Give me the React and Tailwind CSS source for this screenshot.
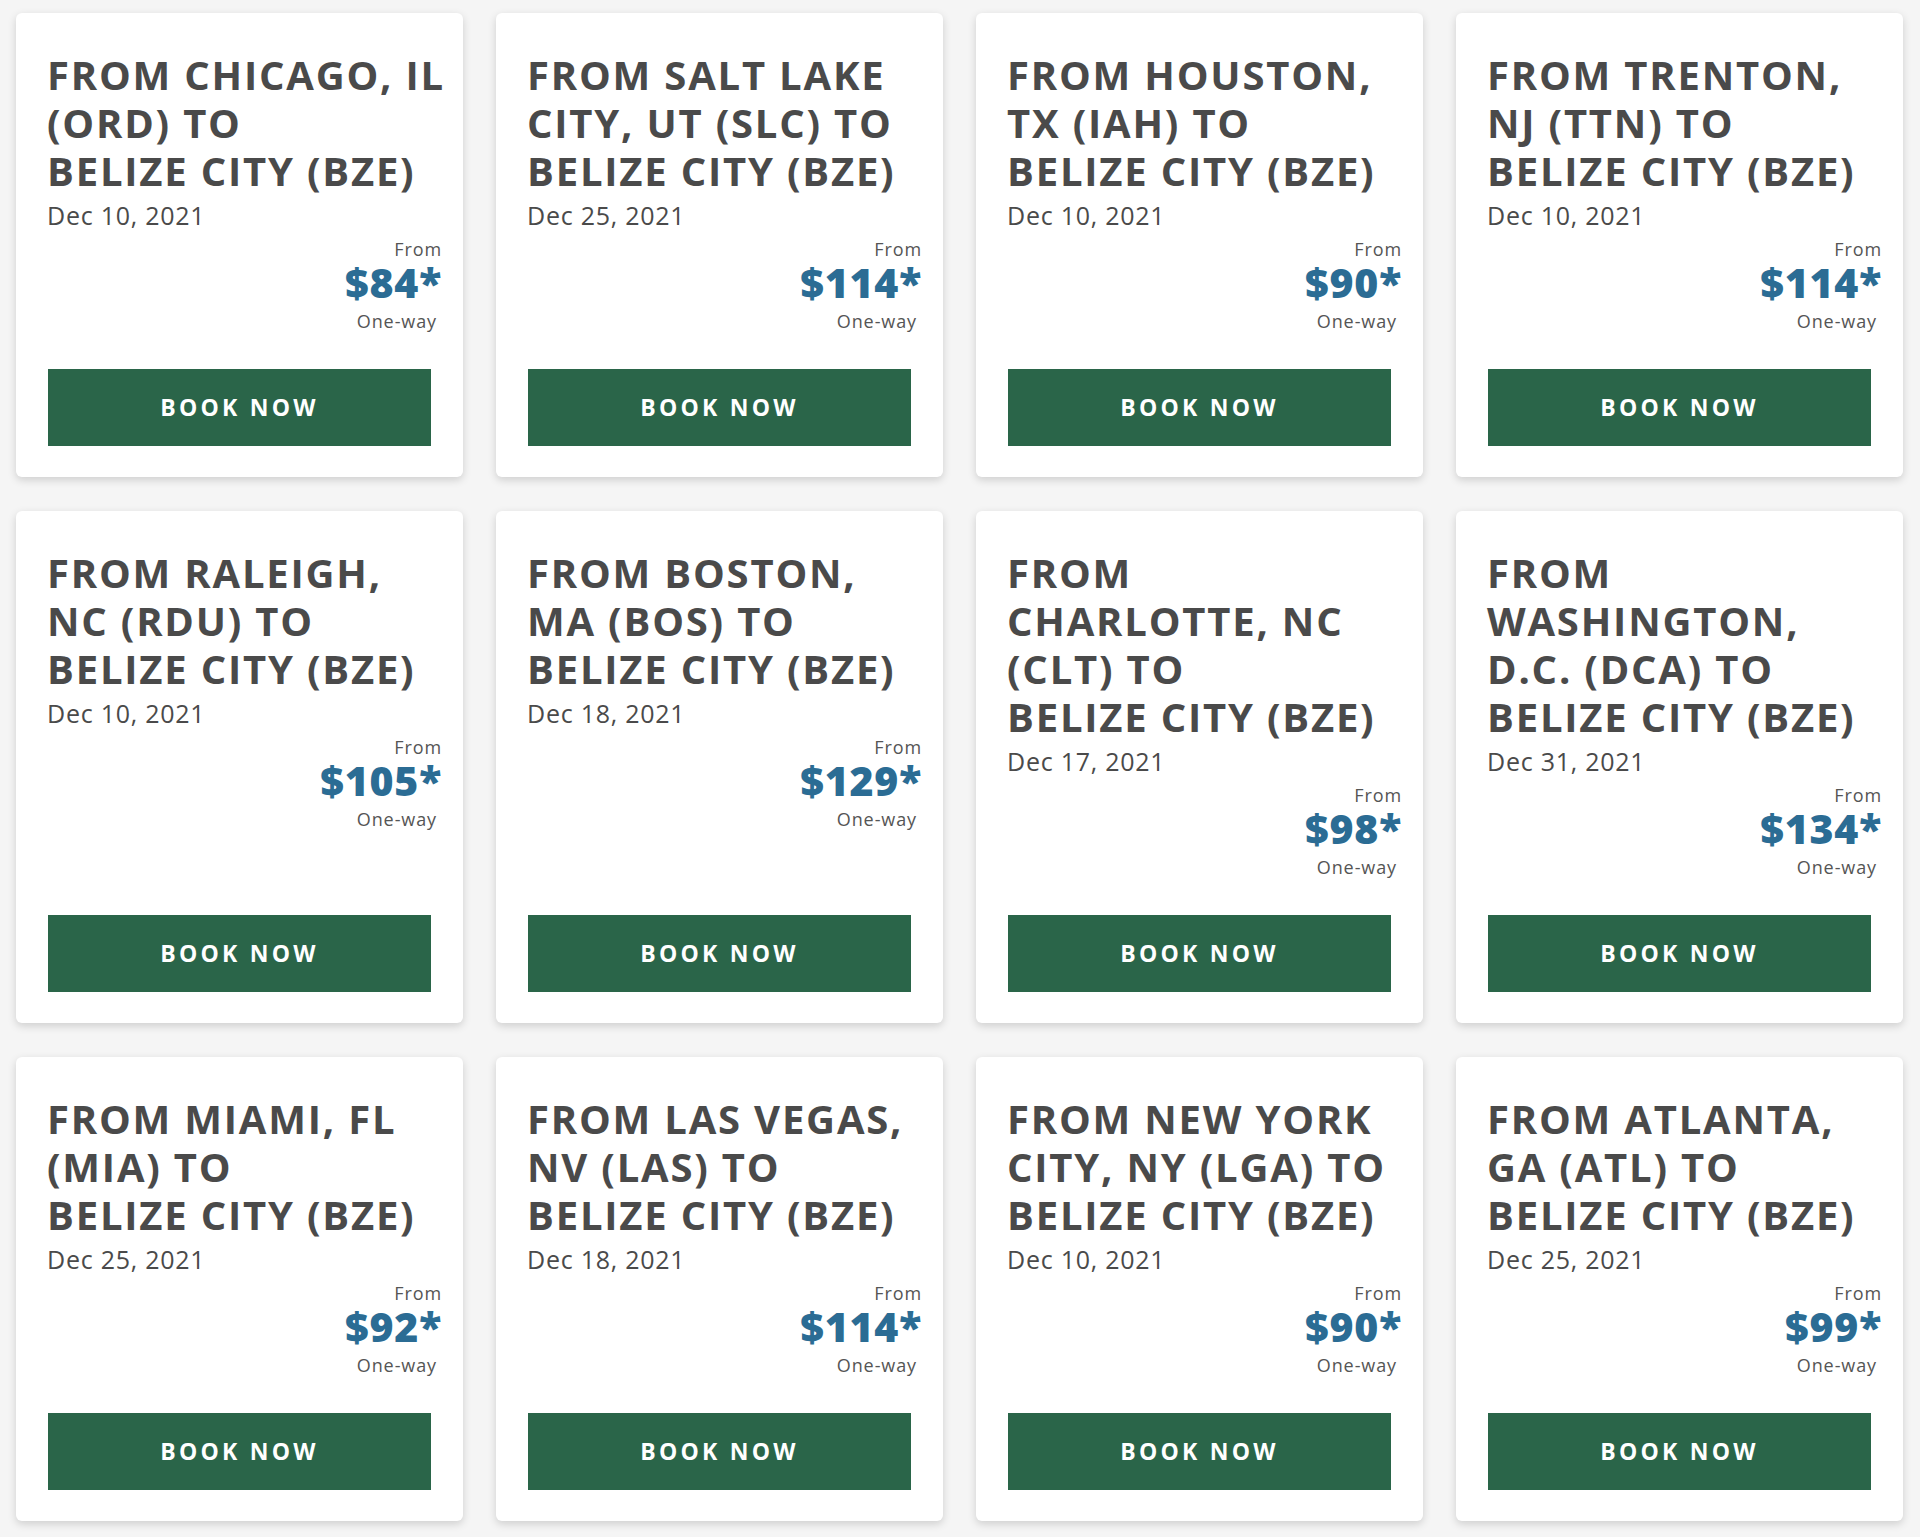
import React from 'react';

const deals = [
  { lines: ['From Chicago, IL', '(ORD) to', 'Belize City (BZE)'], date: 'Dec 10, 2021', price: 84 },
  { lines: ['From Salt Lake', 'City, UT (SLC) to', 'Belize City (BZE)'], date: 'Dec 25, 2021', price: 114 },
  { lines: ['From Houston,', 'TX (IAH) to', 'Belize City (BZE)'], date: 'Dec 10, 2021', price: 90 },
  { lines: ['From Trenton,', 'NJ (TTN) to', 'Belize City (BZE)'], date: 'Dec 10, 2021', price: 114 },
  { lines: ['From Raleigh,', 'NC (RDU) to', 'Belize City (BZE)'], date: 'Dec 10, 2021', price: 105 },
  { lines: ['From Boston,', 'MA (BOS) to', 'Belize City (BZE)'], date: 'Dec 18, 2021', price: 129 },
  { lines: ['From', 'Charlotte, NC', '(CLT) to', 'Belize City (BZE)'], date: 'Dec 17, 2021', price: 98 },
  { lines: ['From', 'Washington,', 'D.C. (DCA) to', 'Belize City (BZE)'], date: 'Dec 31, 2021', price: 134 },
  { lines: ['From Miami, FL', '(MIA) to', 'Belize City (BZE)'], date: 'Dec 25, 2021', price: 92 },
  { lines: ['From Las Vegas,', 'NV (LAS) to', 'Belize City (BZE)'], date: 'Dec 18, 2021', price: 114 },
  { lines: ['From New York', 'City, NY (LGA) to', 'Belize City (BZE)'], date: 'Dec 10, 2021', price: 90 },
  { lines: ['From Atlanta,', 'GA (ATL) to', 'Belize City (BZE)'], date: 'Dec 25, 2021', price: 99 },
];

const DealCard = ({ lines, date, price }) => (
  <div className="flex flex-col rounded-md bg-white px-8 pt-[38px] pb-[31px] shadow-[0_3px_8px_rgba(0,0,0,0.16)]">
    <h3 className="-ml-px -mr-[11px] text-[40px] font-bold uppercase leading-[48px] tracking-[0.045em] text-[#4a4a4a]">
      {lines.map((line) => (
        <span key={line} className="block whitespace-nowrap">{line}</span>
      ))}
    </h3>
    <p className="-ml-px mt-[5px] text-[25px] leading-[30px] tracking-[0.03em] text-[#4a4a4a]">{date}</p>

    <div className="-mr-[11px] mt-2 mb-[37px] flex flex-col items-end">
      <span className="text-[18px] leading-[22px] tracking-[0.05em] text-[#555]">From</span>
      <span className="text-[41px] font-extrabold leading-[44px] tracking-[0.02em] text-[#2b6c94]">${price}*</span>
      <span className="mt-[6px] pr-[5px] text-[18px] leading-[22px] tracking-[0.05em] text-[#555]">One-way</span>
    </div>

    <button className="mt-auto h-[77px] w-full bg-[#2a6549] text-[23px] font-bold uppercase tracking-[0.14em] text-white">
      Book now
    </button>
  </div>
);

export default function App() {
  return (
    <div className="min-h-screen bg-[#f5f5f5] pl-4 pr-[17px] pt-[13px] pb-[15px] font-['Open_Sans',sans-serif]">
      <div className="grid grid-cols-4 gap-x-[33px] gap-y-[34px]">
        {deals.map((deal, i) => (
          <DealCard key={i} {...deal} />
        ))}
      </div>
    </div>
  );
}
